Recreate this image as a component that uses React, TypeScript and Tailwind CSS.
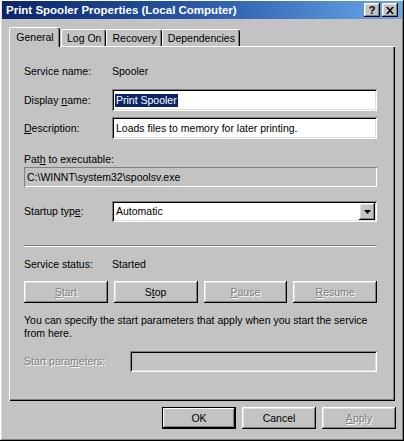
import type { ReactNode } from 'react';

const raised =
  'shadow-[inset_-1px_-1px_#000,inset_1px_1px_#fff,inset_-2px_-2px_#808080,inset_2px_2px_#dfdfdf]';
const sunken =
  'shadow-[inset_1px_1px_#808080,inset_-1px_-1px_#fff,inset_2px_2px_#000,inset_-2px_-2px_#dfdfdf]';
const disabledText = 'text-[#808080] [text-shadow:1px_1px_0_#fff]';

function U({ children }: { children: ReactNode }) {
  return <span className="underline underline-offset-[1px]">{children}</span>;
}

function Btn({
  children,
  disabled,
  className = '',
}: {
  children: ReactNode;
  disabled?: boolean;
  className?: string;
}) {
  return (
    <div
      className={`flex h-[22px] items-center justify-center bg-[#c3c3c3] ${raised} ${
        disabled ? disabledText : 'text-black'
      } ${className}`}
    >
      <span>{children}</span>
    </div>
  );
}

function Tab({ label, active }: { label: string; active?: boolean }) {
  if (active) {
    return (
      <div className="relative z-10 -mb-px ml-px flex h-[20px] w-[51px] items-center justify-center rounded-t-[2px] border-l border-t border-white bg-[#c3c3c3] shadow-[inset_-1px_0_#000,inset_-2px_0_#808080]">
        {label}
      </div>
    );
  }
  return (
    <div className="flex h-[17px] items-center justify-center rounded-t-[2px] border-l border-t border-white bg-[#c3c3c3] px-[5px] shadow-[inset_-1px_0_#000,inset_-2px_0_#808080]">
      {label}
    </div>
  );
}

export default function App() {
  return (
    <div className="font-['Liberation_Sans',Arial,sans-serif] text-[10.5px] leading-[13px] text-black">
      <div
        className={`flex h-[441px] w-[404px] flex-col bg-[#c3c3c3] px-[2px] pt-[1px] ${raised}`}
      >
        {/* title bar */}
        <div className="flex h-[18px] items-center justify-between bg-gradient-to-r from-[#0a246a] via-[#2a5aa8] to-[#6aa8e8] pl-[4px] pr-[4px]">
          <span className="text-[11.5px] font-bold text-white">Print Spooler Properties (Local Computer)</span>
          <div className="flex gap-[2px]">
            <div className={`flex h-[14px] w-[16px] items-center justify-center bg-[#c3c3c3] text-[11px] font-bold leading-none ${raised}`}>
              ?
            </div>
            <div className={`flex h-[14px] w-[16px] items-center justify-center bg-[#c3c3c3] ${raised}`}>
              <svg width="8" height="7" viewBox="0 0 8 7">
                <path d="M0 0h2l2 2.5L6 0h2L5 3.5 8 7H6L4 4.5 2 7H0l3-3.5z" fill="#000" />
              </svg>
            </div>
          </div>
        </div>

        {/* tabs */}
        <div className="mt-[8px] flex items-end pl-[6px]">
          <Tab label="General" active />
          <div className="w-px" />
          <Tab label="Log On" />
          <Tab label="Recovery" />
          <Tab label="Dependencies" />
        </div>

        {/* panel */}
        <div className="ml-[7px] flex h-[355px] w-[386px] flex-col border-l border-t border-white bg-[#c3c3c3] pl-[14px] pr-[18px] shadow-[inset_-1px_-1px_#000,inset_-2px_-2px_#808080]">
          <div className="mt-[16px] flex h-[16px] items-center">
            <span className="w-[88px]">Service name:</span>
            <span>Spooler</span>
          </div>

          <div className="mt-[10px] flex h-[22px] items-center">
            <span className="w-[88px]">
              Display <U>n</U>ame:
            </span>
            <div className={`flex h-[22px] flex-1 items-center bg-white px-[3px] ${sunken}`}>
              <span className="bg-[#0a246a] px-px text-white">Print Spooler</span>
            </div>
          </div>

          <div className="mt-[6px] flex h-[22px] items-center">
            <span className="w-[88px]">
              <U>D</U>escription:
            </span>
            <div className={`flex h-[22px] flex-1 items-center bg-white px-[4px] ${sunken}`}>
              Loads files to memory for later printing.
            </div>
          </div>

          <div className="mt-[13px] flex h-[14px] items-center">
            <span>
              Pat<U>h</U> to executable:
            </span>
          </div>
          <div className="mt-[1px] flex h-[20px] items-center bg-[#c3c3c3] px-[3px] shadow-[inset_1px_1px_#808080,inset_-1px_-1px_#fff]">
            C:\WINNT\system32\spoolsv.exe
          </div>

          <div className="mt-[14px] flex h-[21px] items-center">
            <span className="w-[88px]">
              Startup typ<U>e</U>:
            </span>
            <div className={`flex h-[21px] flex-1 items-center justify-between bg-white pl-[4px] pr-[2px] ${sunken}`}>
              <span>Automatic</span>
              <div className={`flex h-[17px] w-[16px] items-center justify-center bg-[#c3c3c3] ${raised}`}>
                <svg width="7" height="4" viewBox="0 0 7 4">
                  <path d="M0 0h7L3.5 4z" fill="#000" />
                </svg>
              </div>
            </div>
          </div>

          <div className="mt-[23px] h-[2px] border-t border-b border-t-[#808080] border-b-white" />

          <div className="mt-[10px] flex h-[14px] items-center">
            <span className="w-[88px]">Service status:</span>
            <span>Started</span>
          </div>

          <div className="mt-[10px] grid grid-cols-4 gap-[6px]">
            <Btn disabled>
              <U>S</U>tart
            </Btn>
            <Btn>
              S<U>t</U>op
            </Btn>
            <Btn disabled>
              <U>P</U>ause
            </Btn>
            <Btn disabled>
              <U>R</U>esume
            </Btn>
          </div>

          <p className="mt-[11px] leading-[13px]">
            You can specify the start parameters that apply when you start the service from here.
          </p>

          <div className="mt-[11px] flex h-[21px] items-center">
            <span className={`w-[106px] ${disabledText}`}>
              Start para<U>m</U>eters:
            </span>
            <div className={`h-[21px] flex-1 bg-[#c3c3c3] ${sunken}`} />
          </div>
        </div>

        {/* dialog buttons */}
        <div className="mt-[6px] flex justify-end gap-[6px] pr-[6px]">
          <div className="flex h-[22px] w-[74px] items-center justify-center border border-black bg-[#c3c3c3] shadow-[inset_-1px_-1px_#000,inset_1px_1px_#fff,inset_-2px_-2px_#808080]">
            OK
          </div>
          <Btn className="w-[74px]">Cancel</Btn>
          <Btn disabled className="w-[74px]">
            <U>A</U>pply
          </Btn>
        </div>
      </div>
    </div>
  );
}
